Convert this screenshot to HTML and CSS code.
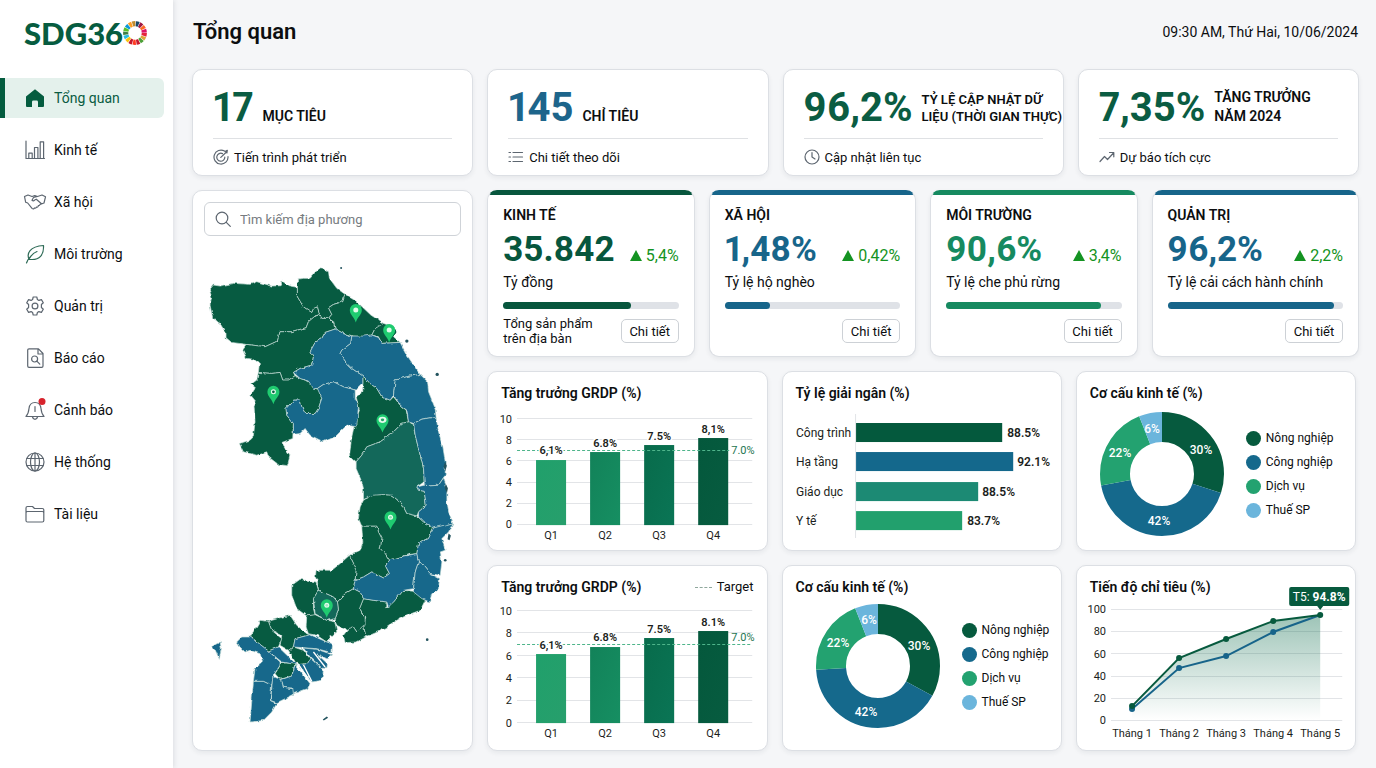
FILE: index.html
```html
<!DOCTYPE html>
<html lang="vi">
<head>
<meta charset="utf-8">
<meta name="viewport" content="width=device-width, initial-scale=1">
<title>SDG360 – Tổng quan</title>
<link rel="stylesheet" href="styles.css">
</head>
<body>
<div class="app">
  <aside class="sidebar">
    <a class="logo" href="#" aria-label="SDG360"><span>SDG36</span><svg class="wheel" viewBox="0 0 24 24" fill="none" stroke-width="5.200">
      <g>
        <circle cx="12" cy="12" r="9.300" stroke="#e5243b" pathLength="17" stroke-dasharray="0.850 16.150"/>
        <circle cx="12" cy="12" r="9.300" stroke="#dda63a" pathLength="17" stroke-dasharray="0.850 16.150" stroke-dashoffset="-1"/>
        <circle cx="12" cy="12" r="9.300" stroke="#4c9f38" pathLength="17" stroke-dasharray="0.850 16.150" stroke-dashoffset="-2"/>
        <circle cx="12" cy="12" r="9.300" stroke="#c5192d" pathLength="17" stroke-dasharray="0.850 16.150" stroke-dashoffset="-3"/>
        <circle cx="12" cy="12" r="9.300" stroke="#ff3a21" pathLength="17" stroke-dasharray="0.850 16.150" stroke-dashoffset="-4"/>
        <circle cx="12" cy="12" r="9.300" stroke="#c5192d" pathLength="17" stroke-dasharray="0.850 16.150" stroke-dashoffset="-5"/>
        <circle cx="12" cy="12" r="9.300" stroke="#fcc30b" pathLength="17" stroke-dasharray="0.850 16.150" stroke-dashoffset="-6"/>
        <circle cx="12" cy="12" r="9.300" stroke="#26bde2" pathLength="17" stroke-dasharray="0.850 16.150" stroke-dashoffset="-7"/>
        <circle cx="12" cy="12" r="9.300" stroke="#3f7e44" pathLength="17" stroke-dasharray="0.850 16.150" stroke-dashoffset="-8"/>
        <circle cx="12" cy="12" r="9.300" stroke="#56c02b" pathLength="17" stroke-dasharray="0.850 16.150" stroke-dashoffset="-9"/>
        <circle cx="12" cy="12" r="9.300" stroke="#0a97d9" pathLength="17" stroke-dasharray="0.850 16.150" stroke-dashoffset="-10"/>
        <circle cx="12" cy="12" r="9.300" stroke="#fd9d24" pathLength="17" stroke-dasharray="0.850 16.150" stroke-dashoffset="-11"/>
        <circle cx="12" cy="12" r="9.300" stroke="#bf8b2e" pathLength="17" stroke-dasharray="0.850 16.150" stroke-dashoffset="-12"/>
        <circle cx="12" cy="12" r="9.300" stroke="#19486a" pathLength="17" stroke-dasharray="0.850 16.150" stroke-dashoffset="-13"/>
        <circle cx="12" cy="12" r="9.300" stroke="#a21942" pathLength="17" stroke-dasharray="0.850 16.150" stroke-dashoffset="-14"/>
        <circle cx="12" cy="12" r="9.300" stroke="#fd6925" pathLength="17" stroke-dasharray="0.850 16.150" stroke-dashoffset="-15"/>
        <circle cx="12" cy="12" r="9.300" stroke="#dd1367" pathLength="17" stroke-dasharray="0.850 16.150" stroke-dashoffset="-16"/>
      </g>
    </svg></a>
    <nav class="nav" aria-label="Menu">
      <a class="nav-item active" href="#"><svg viewBox="0 0 20 20"><path d="M10 1.200 19 8.400V18q0 1-1 1h-5v-5q0-1.400-1.400-1.400H8.400Q7 12.600 7 14v5H2q-1 0-1-1V8.400z" fill="#045c3f"/></svg>Tổng quan</a>
      <a class="nav-item" href="#"><svg class="line" viewBox="0 0 20 20"><path d="M1 1v17.500h18.500M3.800 18.500v-5.300h3.400v5.300M9.500 18.500V7.500h3.400v11M15.200 18.500V1.800h3.400v16.700"/></svg>Kinh tế</a>
      <a class="nav-item" href="#"><svg class="line" viewBox="0 0 20 20"><path d="M-.5 4.500 3 3l4 1.500L9.800 3.600l2.700.9L17 3l3.500 1.800L19 11l-2 .8M-.5 4.500l1.200 5.800 2 .7L7 16.400q1.200 1 2 .2l.4-.6q1 .6 1.800-.3l.3-.7q1 .4 1.600-.5l.2-.8q1.400.1 1.800-1.300l1.900-.8M12.500 4.500 8.500 5.500 7 8.200q1.500 1.400 3-.4l1.300-.6 5.200 4.600"/></svg>Xã hội</a>
      <a class="nav-item" href="#"><svg class="line leaf" viewBox="0 0 20 20"><path d="M1.500 19q1-3 3-5.500M4 15.300C1.500 9.500 4.500 2.500 18.500 1.500c.5 9-3.500 15.300-14.500 13.800zM4 15q3-5.500 8-7.500"/></svg>Môi trường</a>
      <a class="nav-item" href="#"><svg class="line" viewBox="0 0 20 20"><path d="M8.200 1h3.600l.6 2.500 1.500.9 2.500-.8 1.900 3.100-1.900 1.800v3l1.900 1.800-1.900 3.100-2.500-.8-1.500.9-.6 2.500H8.200l-.6-2.500-1.500-.9-2.500.8-1.900-3.100 1.900-1.800v-3L1.700 6.700l1.900-3.100 2.500.8 1.500-.9z"/><circle cx="10" cy="10" r="2.900"/></svg>Quản trị</a>
      <a class="nav-item" href="#"><svg class="line" viewBox="0 0 20 20"><path d="M4 .8h9.500L18 5.500V18q0 1.300-1.300 1.300H4Q2.700 19.300 2.700 18V2Q2.700.8 4 .8zM13 1v5h5"/><circle cx="9.600" cy="11" r="3"/><path d="m11.800 13.200 3 3"/></svg>Báo cáo</a>
      <a class="nav-item" href="#"><svg class="line" viewBox="0 0 20 20"><path d="M1 16.500q2.500-2.600 3-8 .7-6 6-6 5.300 0 6 6 .5 5.400 3 8zM7.500 17q.5 2.300 2.500 2.300t2.500-2.300M10 6.500v5"/><circle cx="17" cy="1.500" r="3.500" fill="#d7232c" stroke="none"/></svg>Cảnh báo</a>
      <a class="nav-item" href="#"><svg class="line" viewBox="0 0 20 20"><circle cx="10" cy="10" r="9"/><ellipse cx="10" cy="10" rx="4.500" ry="9"/><path d="M10 1v18M1.800 6.500h16.400M1.800 13.500h16.400"/></svg>Hệ thống</a>
      <a class="nav-item" href="#"><svg class="line" viewBox="0 0 20 20"><path d="M1 16.500V4Q1 2.500 2.500 2.500h5l2 2h7.800q1.500 0 1.500 1.500v10.500q0 1.500-1.500 1.500H2.500Q1 18 1 16.500zM1 9q0-1.500 1.500-1.500h14.800q1.500 0 1.500 1.500"/></svg>Tài liệu</a>
    </nav>
  </aside>

  <main class="main">
    <header class="topbar">
      <h1>Tổng quan</h1>
      <time datetime="2024-06-10T09:30">09:30 AM, Thứ Hai, 10/06/2024</time>
    </header>

    <div class="board">
      <section class="card kpi">
        <div class="kpi-top"><strong class="green">17</strong><span>MỤC TIÊU</span></div>
        <p><svg class="line" viewBox="0 0 16 16"><path d="M11.500 2A7 7 0 1 0 15 7.500M9.500 4.600A4 4 0 1 0 11.800 8M7.800 8.400 14 2.500M12 2.500l2.300-1.200-.4 2.700"/></svg>Tiến trình phát triển</p>
      </section>
      <section class="card kpi">
        <div class="kpi-top"><strong class="blue">145</strong><span>CHỈ TIÊU</span></div>
        <p><svg class="line" viewBox="0 0 16 16"><path d="M1 3.500h1.500M1 8h1.500M1 12.500h1.500M5 3.500h9.500M5 8h9.500M5 12.500h9.500"/></svg>Chi tiết theo dõi</p>
      </section>
      <section class="card kpi">
        <div class="kpi-top"><strong class="green">96,2%</strong><span class="small">TỶ LỆ CẬP NHẬT DỮ<br>LIỆU (THỜI GIAN THỰC)</span></div>
        <p><svg class="line" viewBox="0 0 16 16"><circle cx="8" cy="8" r="7"/><path d="M8 3.500V8l3 2"/></svg>Cập nhật liên tục</p>
      </section>
      <section class="card kpi">
        <div class="kpi-top"><strong class="green">7,35%</strong><span>TĂNG TRƯỞNG<br>NĂM 2024</span></div>
        <p><svg class="line" viewBox="0 0 16 16"><path d="m1 12.500 4.500-5 3 3 6-6.500M10.500 3.500h4.300v4.300"/></svg>Dự báo tích cực</p>
      </section>

      <section class="card map-card">
        <label class="search">
          <svg class="line" viewBox="0 0 16 16"><circle cx="7" cy="7" r="5.800"/><path d="m11.300 11.300 4 4"/></svg>
          <input type="search" placeholder="Tìm kiếm địa phương" aria-label="Tìm kiếm địa phương">
        </label>
        <svg class="map" viewBox="-21 -24 837 1509" role="img" aria-label="Bản đồ địa phương">
          <defs>
            <filter id="coast" x="-5%" y="-5%" width="110%" height="110%" color-interpolation-filters="sRGB">
              <feTurbulence type="fractalNoise" baseFrequency="0.060" numOctaves="2" seed="4"/>
              <feDisplacementMap in="SourceGraphic" scale="10" xChannelSelector="R" yChannelSelector="G"/>
            </filter>
            <g id="pin"><path d="M0 32C-5 16-18 9-18-5a18 18 0 0 1 36 0C18 9 5 16 0 32z" fill="#1fcb70"/><circle cy="-5" r="7.500" fill="#e3fbec"/></g>
          </defs>
          <g class="regions" filter="url(#coast)">
            <g fill="#075b41">
              <path d="M28 105 40 90 60 93 100 85 150 88 170 80 215 93 240 92 246 78 265 92 292 97 292 125 310 155 335 172 340 160 352 155 358 178 345 183 325 200 318 218 275 230 240 230 232 258 195 275 140 268 95 262 78 248 78 235 60 205 38 188 30 150 35 125z"/>
              <path d="M292 72 310 70 330 70 345 52 362 38 385 50 388 70 410 100 435 118 428 140 400 148 385 158 395 178 385 190 365 190 358 175 352 155 340 160 335 172 310 155 292 125z"/>
              <path d="M435 118 470 140 512 180 550 205 545 215 525 220 515 240 490 245 460 243 430 235 405 222 400 200 385 190 395 178 385 158 400 148 428 140z"/>
              <path d="M550 205 580 215 592 230 580 245 600 262 545 265 535 245 515 240 525 220z"/>
              <path d="M345 183 358 180 365 190 385 190 400 205 405 222 375 232 365 250 345 262 330 290 340 305 335 330 300 340 280 352 285 362 265 375 248 375 240 352 215 355 175 352 178 325 160 312 140 310 128 285 140 268 195 275 232 258 240 230 275 230 318 218 325 200z"/>
              <path d="M175 352 215 355 240 352 248 375 265 375 285 362 300 370 325 378 345 400 355 402 365 430 355 460 345 475 315 475 305 455 300 435 280 435 258 460 260 480 280 505 278 550 245 562 270 600 262 632 235 628 205 605 200 590 170 600 130 590 118 565 150 555 160 545 165 500 162 450 168 440 152 420 165 400 152 388 170 375z"/>
              <path d="M488 362 510 385 530 400 545 425 570 435 580 425 600 450 618 465 625 500 605 505 575 535 540 560 500 575 485 600 468 620 455 608 448 600 455 545 465 500 478 465 468 425 488 410z"/>
              <path d="M490 735 520 718 550 718 575 720 605 745 620 775 650 782 670 800 700 818 685 850 655 865 650 895 625 898 600 905 568 915 555 895 540 880 545 850 535 830 530 813 485 813 475 790 480 755z"/>
              <path d="M485 813 530 813 535 830 545 850 540 880 555 895 568 915 555 930 568 955 550 968 515 950 490 965 465 975 468 940 448 900 480 885 488 860z"/>
              <path d="M560 1055 580 1040 610 1005 640 1008 675 1035 660 1065 620 1080 590 1095 555 1120 497 1145 490 1110 497 1085 478 1060 490 1030 520 1035 560 1040z"/>
              <path d="M348 945 395 945 420 925 448 900 468 940 465 975 460 1000 435 1015 412 1040 400 1025 355 1005 352 980 346 965z"/>
              <path d="M275 990 300 972 348 980 355 1005 340 1030 340 1060 345 1080 320 1082 290 1060 275 1020z"/>
              <path d="M435 1015 460 1000 480 1010 490 1030 478 1060 495 1085 495 1110 470 1130 460 1115 440 1125 410 1110 405 1090 415 1065 412 1040z"/>
              <path d="M430 1140 445 1120 460 1115 470 1130 490 1110 497 1145 470 1160 435 1162z"/>
              <path d="M320 1082 345 1078 380 1095 405 1100 410 1130 395 1145 380 1160 350 1140 325 1135 318 1115z"/>
              <path d="M240 1088 270 1080 290 1110 320 1135 330 1138 285 1150 280 1175 265 1185 240 1170 245 1140 215 1125 205 1098z"/>
              <path d="M150 1145 180 1095 205 1098 215 1125 245 1150 235 1175 205 1187 165 1155z"/>
              <path d="M225 1255 245 1222 285 1225 275 1262 240 1272z"/>
              <path d="M265 1185 280 1175 310 1185 330 1210 320 1225 290 1228z"/>
            </g>
            <g fill="#13685a">
              <path d="M625 500 640 508 645 540 660 600 670 640 672 680 650 695 655 705 672 708 675 725 678 750 655 770 650 782 620 775 605 745 575 720 550 718 520 720 490 733 490 700 485 680 468 640 468 620 485 600 500 575 540 560 575 535 605 505z"/>
              <path d="M355 1005 400 1025 412 1040 415 1065 405 1090 380 1095 345 1075 340 1030z"/>
            </g>
            <g fill="#17688b">
              <path d="M405 222 430 235 455 243 452 265 425 285 420 295 440 325 455 340 488 362 488 385 468 405 430 395 400 380 370 388 352 400 340 400 325 378 300 370 280 352 300 340 335 330 340 305 330 290 345 262 365 250 375 232z"/>
              <path d="M455 243 490 243 515 240 535 247 545 265 600 262 620 300 650 345 660 358 620 365 585 375 580 420 570 435 545 425 530 400 510 385 488 362 455 340 440 325 420 295 425 285 452 265z"/>
              <path d="M352 400 370 388 400 380 430 395 465 405 465 430 475 450 470 515 440 510 405 545 370 560 330 540 315 520 300 535 280 537 280 505 260 480 258 460 280 435 300 435 305 455 315 475 345 475 355 460 365 430z"/>
              <path d="M585 375 620 365 660 358 682 380 685 410 705 460 708 490 690 488 665 492 640 505 625 500 620 465 600 450 580 420z"/>
              <path d="M640 505 665 492 690 488 708 490 715 530 728 575 735 620 735 660 728 670 715 690 690 692 672 690 672 680 670 640 660 600 645 540z"/>
              <path d="M672 690 690 692 715 690 730 668 740 700 740 740 745 770 758 803 720 815 700 818 670 800 655 785 655 770 678 750 675 725 672 708 655 705 650 695z"/>
              <path d="M568 915 600 905 650 895 655 920 645 950 640 1000 610 1005 580 1040 565 1055 560 1040 520 1035 490 1030 480 1010 460 1000 465 975 490 965 515 950 550 968 568 955 555 930z"/>
              <path d="M700 818 758 803 745 830 725 850 735 885 720 890 725 920 720 960 690 955 670 930 655 920 650 895 655 865 685 850z"/>
              <path d="M655 920 670 930 690 955 718 970 715 1000 695 1015 688 1040 665 1030 640 1010 640 1000 645 950z"/>
              <path d="M110 1160 125 1145 150 1145 165 1155 205 1187 240 1220 240 1230 220 1260 215 1290 190 1278 160 1278 165 1240 188 1220 180 1195 150 1185 135 1190 120 1175z"/>
              <path d="M160 1278 190 1278 215 1290 210 1335 230 1345 215 1370 190 1395 150 1400 155 1340z"/>
              <path d="M218 1264 245 1272 250 1296 280 1300 280 1318 230 1342 212 1335z"/>
              <path d="M285 1228 330 1285 322 1300 280 1315 278 1298 250 1296 245 1272 275 1262z"/>
              <path d="M205 1187 235 1175 290 1228 245 1220z"/>
              <path d="M280 1175 285 1150 330 1138 380 1160 398 1165 395 1192 350 1180z"/>
              <path d="M310 1178 350 1182 398 1198 380 1210 350 1195 382 1225 380 1240 365 1238 330 1205z"/>
              <path d="M330 1208 370 1245 365 1275 335 1280 295 1228 320 1225z"/>
              <path d="M38 1172 60 1160 64 1180 58 1212 46 1185z"/>
            </g>
          </g>
          <g fill="#24545f">
            <circle cx="423" cy="39" r="3"/><circle cx="620" cy="258" r="5"/><circle cx="711" cy="358" r="5"/><circle cx="735" cy="915" r="4"/><circle cx="681" cy="1153" r="4"/><path d="m368 1392 12-9 4 4-13 8zM745 835l7 6-4 14-6-3zM735 620l5 12-5 16-5-14zM736 685l7 14-3 14-6-14z"/>
          </g>
          <path class="channel" d="M390 1140l8 30M404 1130l2 35M412 1130l10 22M395 1150l30-8M290 1220l45 65M310 1228l25 50M340 1190l35 45"/>
          <use href="#pin" x="467" y="170"/><use href="#pin" x="567" y="230"/><use href="#pin" x="220" y="415"/>
          <use href="#pin" x="547" y="500"/><use href="#pin" x="571" y="791"/><use href="#pin" x="380" y="1055"/>
          <circle cx="220" cy="410" r="4" fill="#075b41"/><ellipse cx="547" cy="494" rx="12" ry="9" fill="#e3fbec"/><ellipse cx="547" cy="494" rx="5" ry="4" fill="#23a466"/><circle cx="571" cy="786" r="4" fill="#8adcb0"/><circle cx="380" cy="1050" r="4" fill="#a5e8c4"/>
        </svg>
      </section>

      <div class="right">
        <div class="stats">
          <section class="card stat c-green">
            <h2>KINH TẾ</h2>
            <div class="figure"><strong>35.842</strong><span class="delta">5,4%</span></div>
            <p>Tỷ đồng</p>
            <div class="track"><div class="fill" style="width:73%"></div></div>
            <div class="foot"><span>Tổng sản phẩm<br>trên địa bàn</span><button type="button">Chi tiết</button></div>
          </section>
          <section class="card stat c-blue">
            <h2>XÃ HỘI</h2>
            <div class="figure"><strong>1,48%</strong><span class="delta">0,42%</span></div>
            <p>Tỷ lệ hộ nghèo</p>
            <div class="track"><div class="fill" style="width:26%"></div></div>
            <div class="foot"><span></span><button type="button">Chi tiết</button></div>
          </section>
          <section class="card stat c-mid">
            <h2>MÔI TRƯỜNG</h2>
            <div class="figure"><strong>90,6%</strong><span class="delta">3,4%</span></div>
            <p>Tỷ lệ che phủ rừng</p>
            <div class="track"><div class="fill" style="width:88%"></div></div>
            <div class="foot"><span></span><button type="button">Chi tiết</button></div>
          </section>
          <section class="card stat c-blue">
            <h2>QUẢN TRỊ</h2>
            <div class="figure"><strong>96,2%</strong><span class="delta">2,2%</span></div>
            <p>Tỷ lệ cải cách hành chính</p>
            <div class="track"><div class="fill" style="width:95%"></div></div>
            <div class="foot"><span></span><button type="button">Chi tiết</button></div>
          </section>
        </div>

        <div class="charts">
          <section class="card chart">
            <div class="chart-head"><h2>Tăng trưởng GRDP (%)</h2></div>
            <svg viewBox="0 0 278 147">
              <defs>
                <linearGradient id="b1" x2="1" y2="1"><stop stop-color="#20a06b"/><stop offset="1" stop-color="#279f6c"/></linearGradient>
                <linearGradient id="b2" x2="1" y2="1"><stop stop-color="#128259"/><stop offset="1" stop-color="#168f62"/></linearGradient>
                <linearGradient id="b3" x2="1" y2="1"><stop stop-color="#086b4b"/><stop offset="1" stop-color="#0a7555"/></linearGradient>
                <linearGradient id="b4" x2="1" y2="1"><stop stop-color="#04583c"/><stop offset="1" stop-color="#075c40"/></linearGradient>
              </defs>
              <path class="gridline" d="M29 15.500h235M29 36.500h235M29 57.500h235M29 79.500h235M29 100.500h235M29 121.500h235"/>
              <g class="tick end"><text x="24" y="20">10</text><text x="24" y="41">8</text><text x="24" y="62">6</text><text x="24" y="83">4</text><text x="24" y="104">2</text><text x="24" y="125">0</text></g>
              <rect x="48" y="57" width="30" height="65" fill="url(#b1)"/><rect x="102" y="49" width="30" height="73" fill="url(#b2)"/><rect x="156" y="42" width="30" height="80" fill="url(#b3)"/><rect x="210" y="35" width="30" height="87" fill="url(#b4)"/>
              <path class="target" d="M29 47.500h212"/>
              <g class="value mid"><text x="63" y="51">6,1%</text><text x="117" y="44">6.8%</text><text x="171" y="37">7.5%</text><text x="225" y="30">8,1%</text></g>
              <g class="tick mid"><text x="63" y="136">Q1</text><text x="117" y="136">Q2</text><text x="171" y="136">Q3</text><text x="225" y="136">Q4</text></g>
              <text class="target-label" x="243" y="51">7.0%</text>
            </svg>
          </section>

          <section class="card chart">
            <div class="chart-head"><h2>Tỷ lệ giải ngân (%)</h2></div>
            <svg viewBox="0 0 278 147">
              <path class="gridline" d="M72.500 11v124"/>
              <rect x="73" y="20" width="146" height="19" fill="#04593d"/><rect x="73" y="49" width="157" height="19" fill="#14688c"/><rect x="73" y="79" width="122" height="19" fill="#1c8a74"/><rect x="73" y="108" width="106" height="19" fill="#22a06d"/>
              <g class="cat"><text x="13" y="34">Công trình</text><text x="13" y="63">Hạ tầng</text><text x="13" y="93">Giáo dục</text><text x="13" y="122">Y tế</text></g>
              <g class="value big"><text x="224" y="34">88.5%</text><text x="234" y="63">92.1%</text><text x="199" y="93">88.5%</text><text x="184" y="122">83.7%</text></g>
            </svg>
          </section>

          <section class="card chart">
            <div class="chart-head"><h2>Cơ cấu kinh tế (%)</h2></div>
            <div class="donut-row">
              <svg viewBox="0 0 124 124">
                <g transform="rotate(-90 62 62)" fill="none" stroke-width="30">
                  <circle cx="62" cy="62" r="47" pathLength="100" stroke="#065a3e" stroke-dasharray="30 70"/>
                  <circle cx="62" cy="62" r="47" pathLength="100" stroke="#15698c" stroke-dasharray="42 58" stroke-dashoffset="-30"/>
                  <circle cx="62" cy="62" r="47" pathLength="100" stroke="#23a270" stroke-dasharray="22 78" stroke-dashoffset="-72"/>
                  <circle cx="62" cy="62" r="47" pathLength="100" stroke="#6bb5dc" stroke-dasharray="6 94" stroke-dashoffset="-94"/>
                </g>
                <g class="slice mid"><text x="101" y="42">30%</text><text x="59" y="113">42%</text><text x="20" y="45">22%</text><text x="52" y="21">6%</text></g>
              </svg>
              <ul><li class="k1">Nông nghiệp</li><li class="k2">Công nghiệp</li><li class="k3">Dịch vụ</li><li class="k4">Thuế SP</li></ul>
            </div>
          </section>

          <section class="card chart">
            <div class="chart-head"><h2>Tăng trưởng GRDP (%)</h2><span class="legend"><i></i>Target</span></div>
            <svg viewBox="0 0 278 153">
              <path class="gridline" d="M29 13.500h235M29 35.500h235M29 58.500h235M29 80.500h235M29 103.500h235M29 125.500h235"/>
              <g class="tick end"><text x="24" y="18">10</text><text x="24" y="40">8</text><text x="24" y="63">6</text><text x="24" y="85">4</text><text x="24" y="107">2</text><text x="24" y="130">0</text></g>
              <rect x="48" y="57" width="30" height="69" fill="url(#b1)"/><rect x="102" y="50" width="30" height="76" fill="url(#b2)"/><rect x="156" y="41" width="30" height="85" fill="url(#b3)"/><rect x="210" y="34" width="30" height="92" fill="url(#b4)"/>
              <path class="target" d="M29 47.500h235"/>
              <g class="value mid"><text x="63" y="52">6,1%</text><text x="117" y="44">6.8%</text><text x="171" y="36">7.5%</text><text x="225" y="29">8.1%</text></g>
              <g class="tick mid"><text x="63" y="140">Q1</text><text x="117" y="140">Q2</text><text x="171" y="140">Q3</text><text x="225" y="140">Q4</text></g>
              <text class="target-label" x="243" y="44">7.0%</text>
            </svg>
          </section>

          <section class="card chart">
            <div class="chart-head"><h2>Cơ cấu kinh tế (%)</h2></div>
            <div class="donut-row inset">
              <svg viewBox="0 0 124 124">
                <g transform="rotate(-90 62 62)" fill="none" stroke-width="30">
                  <circle cx="62" cy="62" r="47" pathLength="100" stroke="#065a3e" stroke-dasharray="33 67"/>
                  <circle cx="62" cy="62" r="47" pathLength="100" stroke="#15698c" stroke-dasharray="41 59" stroke-dashoffset="-33"/>
                  <circle cx="62" cy="62" r="47" pathLength="100" stroke="#23a270" stroke-dasharray="20 80" stroke-dashoffset="-74"/>
                  <circle cx="62" cy="62" r="47" pathLength="100" stroke="#6bb5dc" stroke-dasharray="6 94" stroke-dashoffset="-94"/>
                </g>
                <g class="slice mid"><text x="103" y="46">30%</text><text x="50" y="112">42%</text><text x="22" y="43">22%</text><text x="53" y="20">6%</text></g>
              </svg>
              <ul><li class="k1">Nông nghiệp</li><li class="k2">Công nghiệp</li><li class="k3">Dịch vụ</li><li class="k4">Thuế SP</li></ul>
            </div>
          </section>

          <section class="card chart">
            <div class="chart-head"><h2>Tiến độ chỉ tiêu (%)</h2></div>
            <svg viewBox="0 0 278 153">
              <defs><linearGradient id="area" x2="0" y2="1"><stop stop-color="#0b6b4b" stop-opacity=".4"/><stop offset="1" stop-color="#0b6b4b" stop-opacity="0"/></linearGradient></defs>
              <path class="gridline" d="M34 12.500h231M34 34.500h231M34 56.500h231M34 79.500h231M34 101.500h231M34 123.500h231"/>
              <g class="tick end"><text x="29" y="16">100</text><text x="29" y="38">80</text><text x="29" y="61">60</text><text x="29" y="83">40</text><text x="29" y="105">20</text><text x="29" y="127">0</text></g>
              <path d="M55 109 102 61 149 42 196 24 243 18V123H55z" fill="url(#area)"/>
              <g fill="none" stroke-width="2"><path d="M55 112 102 71 149 59 196 35 243 18" stroke="#17648a"/><path d="M55 109 102 61 149 42 196 24 243 18" stroke="#075a3e"/></g>
              <g fill="#17648a"><circle cx="55" cy="112" r="3"/><circle cx="102" cy="71" r="3"/><circle cx="149" cy="59" r="3"/><circle cx="196" cy="35" r="3"/></g>
              <g fill="#075a3e"><circle cx="55" cy="109" r="3"/><circle cx="102" cy="61" r="3"/><circle cx="149" cy="42" r="3"/><circle cx="196" cy="24" r="3"/><circle cx="243" cy="18" r="3"/></g>
              <g class="tick mid"><text x="55" y="140">Tháng 1</text><text x="102" y="140">Tháng 2</text><text x="149" y="140">Tháng 3</text><text x="196" y="140">Tháng 4</text><text x="243" y="140">Tháng 5</text></g>
              <path d="M214-10h56q2 0 2 2V7q0 2-2 2h-24l-3 4-3-4h-26q-2 0-2-2V-8q0-2 2-2z" fill="#075a3e"/>
              <text class="tip mid" x="242" y="4">T5: <tspan font-weight="700">94.8%</tspan></text>
            </svg>
          </section>
        </div>
      </div>
    </div>
  </main>
</div>
</body>
</html>
```
FILE: styles.css
```css
* { box-sizing: border-box; }

body {
  margin: 0;
  background: #f5f6f8;
  color: #0c0e10;
  font-family: Roboto, "Noto Sans", sans-serif;
  font-size: 14px;
}

h1, h2, p, ul { margin: 0; padding: 0; }
svg { display: block; }

.line {
  fill: none;
  stroke: #5d6670;
  stroke-width: 1.2;
  stroke-linecap: round;
  stroke-linejoin: round;
}

.app { display: flex; min-height: 100vh; }

/* Sidebar */
.sidebar {
  flex: 0 0 173px;
  background: #fff;
  box-shadow: 1px 0 5px rgba(30, 45, 60, .12);
}
.logo {
  display: flex;
  align-items: center;
  height: 66px;
  padding-left: 24px;
  color: #065c40;
  font-family: Lato, sans-serif;
  font-size: 31px;
  font-weight: 900;
  line-height: 40px;
  text-decoration: none;
}
.wheel { width: 24px; height: 24px; }
.nav { display: flex; flex-direction: column; gap: 12px; padding-top: 12px; }
.nav-item {
  display: flex;
  align-items: center;
  gap: 9px;
  height: 40px;
  margin-right: 9px;
  padding-left: 20px;
  border-left: 5px solid transparent;
  border-radius: 0 6px 6px 0;
  color: #0c0e10;
  font-size: 14px;
  text-decoration: none;
}
.nav-item svg { width: 20px; height: 20px; overflow: visible; }
.nav-item .leaf { stroke: #2f6b57; }
.nav-item.active { border-left-color: #045c3f; background: #e4f1ec; color: #0a5c42; }

/* Page header */
.main { flex: 1; min-width: 0; padding: 0 17px 17px 19px; }
.topbar { display: flex; align-items: center; justify-content: space-between; height: 69px; padding: 0 1px 6px; }
h1 { font-size: 22px; font-weight: 600; line-height: 28px; }
time { font-size: 14px; }

.board { display: grid; grid-template-columns: repeat(4, minmax(0, 1fr)); gap: 14px; }
.card {
  background: #fff;
  border: 1px solid #dcdfe4;
  border-radius: 10px;
  box-shadow: 0 2px 5px rgba(30, 45, 60, .07);
}

/* Headline figures */
.kpi { padding: 0 20px; }
.kpi-top {
  display: flex;
  align-items: last baseline;
  gap: 9px;
  height: 69px;
  padding-bottom: 10px;
  border-bottom: 1px solid #dfe1e4;
  white-space: nowrap;
}
.kpi strong { font-size: 40px; font-weight: 700; line-height: 40px; font-variant-numeric: proportional-nums; }
.kpi span { font-size: 14px; font-weight: 600; line-height: 19px; }
.kpi .small { font-size: 13px; line-height: 17px; }
.kpi p { display: flex; align-items: center; gap: 5px; height: 36px; font-size: 13px; }
.kpi p svg { width: 16px; height: 16px; }
.green { color: #0a5c42; }
.blue { color: #1d658b; }

/* Map */
.map-card { padding-top: 11px; }
.search {
  display: flex;
  align-items: center;
  gap: 9px;
  height: 34px;
  margin: 0 11px;
  padding: 0 10px;
  border: 1px solid #cfd3d8;
  border-radius: 6px;
}
.search svg { width: 16px; height: 16px; }
.search input {
  flex: 1;
  min-width: 0;
  padding: 0;
  border: 0;
  outline: 0;
  background: none;
  font: inherit;
  font-size: 13px;
}
.search input::placeholder { color: #767b80; }
.map { width: 100%; margin-top: 11px; }
.regions path { stroke: #c9e0da; stroke-width: 2; stroke-linejoin: round; }
.channel { fill: none; stroke: #fff; stroke-width: 4; }

/* Topic cards */
.right { grid-column: span 3; display: grid; grid-template-columns: minmax(0, 1fr); gap: 14px; align-content: start; }
.stats { display: grid; grid-template-columns: repeat(4, minmax(0, 1fr)); gap: 14px; }
.stat {
  padding: 14px 15px 10px;
  border-top-color: transparent;
  background: linear-gradient(var(--tone), var(--tone)) top / 100% 5px no-repeat border-box, #fff;
}
.c-green { --tone: #07563d; }
.c-blue { --tone: #17658a; }
.c-mid { --tone: #168a60; }
.stat h2 { font-size: 14px; font-weight: 600; line-height: 20px; }
.figure { display: flex; align-items: baseline; justify-content: space-between; height: 46px; margin-top: 1px; }
.figure strong { color: var(--tone); font-size: 35px; font-weight: 700; line-height: 48px; font-variant-numeric: proportional-nums; }
.delta { color: #149322; font-size: 16px; }
.delta::before {
  content: "";
  display: inline-block;
  margin-right: 4px;
  border: 6px solid transparent;
  border-top: 0;
  border-bottom: 11px solid #149322;
}
.stat p { line-height: 20px; }
.track { height: 7px; margin-top: 10px; border-radius: 4px; background: #dfe2e7; }
.fill { height: 7px; border-radius: 4px; background: var(--tone); }
.foot { display: flex; align-items: center; justify-content: space-between; height: 30px; margin-top: 7px; font-size: 13px; line-height: 15px; }
.foot button {
  width: 58px;
  height: 24px;
  padding: 0;
  border: 1px solid #cdd1d6;
  border-radius: 5px;
  background: #fff;
  color: inherit;
  font: inherit;
}

/* Charts */
.charts { display: grid; grid-template-columns: repeat(3, minmax(0, 1fr)); gap: 14px; padding-right: 3px; }
.chart-head { display: flex; align-items: center; justify-content: space-between; padding: 11px 13px 0; }
.chart h2 { font-size: 14px; font-weight: 600; line-height: 20px; }
.chart > svg { width: 100%; overflow: visible; }
.legend { display: flex; align-items: center; gap: 5px; font-size: 13px; line-height: 20px; }
.legend i { width: 17px; border-top: 1px dashed #8fa79c; }

.chart text { fill: #1b1e20; font-size: 11px; }
.end { text-anchor: end; }
.mid { text-anchor: middle; }
.gridline { fill: none; stroke: #e2e4e7; stroke-width: 1; }
.target { fill: none; stroke: #4fb58b; stroke-width: 1; stroke-dasharray: 3 2; }
.chart .target-label { fill: #1d7550; }
.chart .value text { font-weight: 600; paint-order: stroke; stroke: #fff; stroke-width: 3px; }
.chart .big text, .chart .cat text { font-size: 12px; }
.chart .slice text { fill: #fff; font-size: 12px; font-weight: 500; }
.chart .tip { fill: #fff; font-size: 12px; }

.donut-row { display: flex; align-items: center; gap: 22px; padding: 9px 0 13px 23px; }
.donut-row.inset { padding: 7px 0 20px 33px; }
.donut-row svg { flex: 0 0 124px; height: 124px; }
ul { list-style: none; }
li { display: flex; align-items: center; gap: 5px; font-size: 12px; line-height: 24px; white-space: nowrap; }
li::before { content: ""; width: 15px; height: 15px; border-radius: 50%; background: var(--dot); }
.k1 { --dot: #065a3e; }
.k2 { --dot: #15698c; }
.k3 { --dot: #23a270; }
.k4 { --dot: #6bb5dc; }
```
